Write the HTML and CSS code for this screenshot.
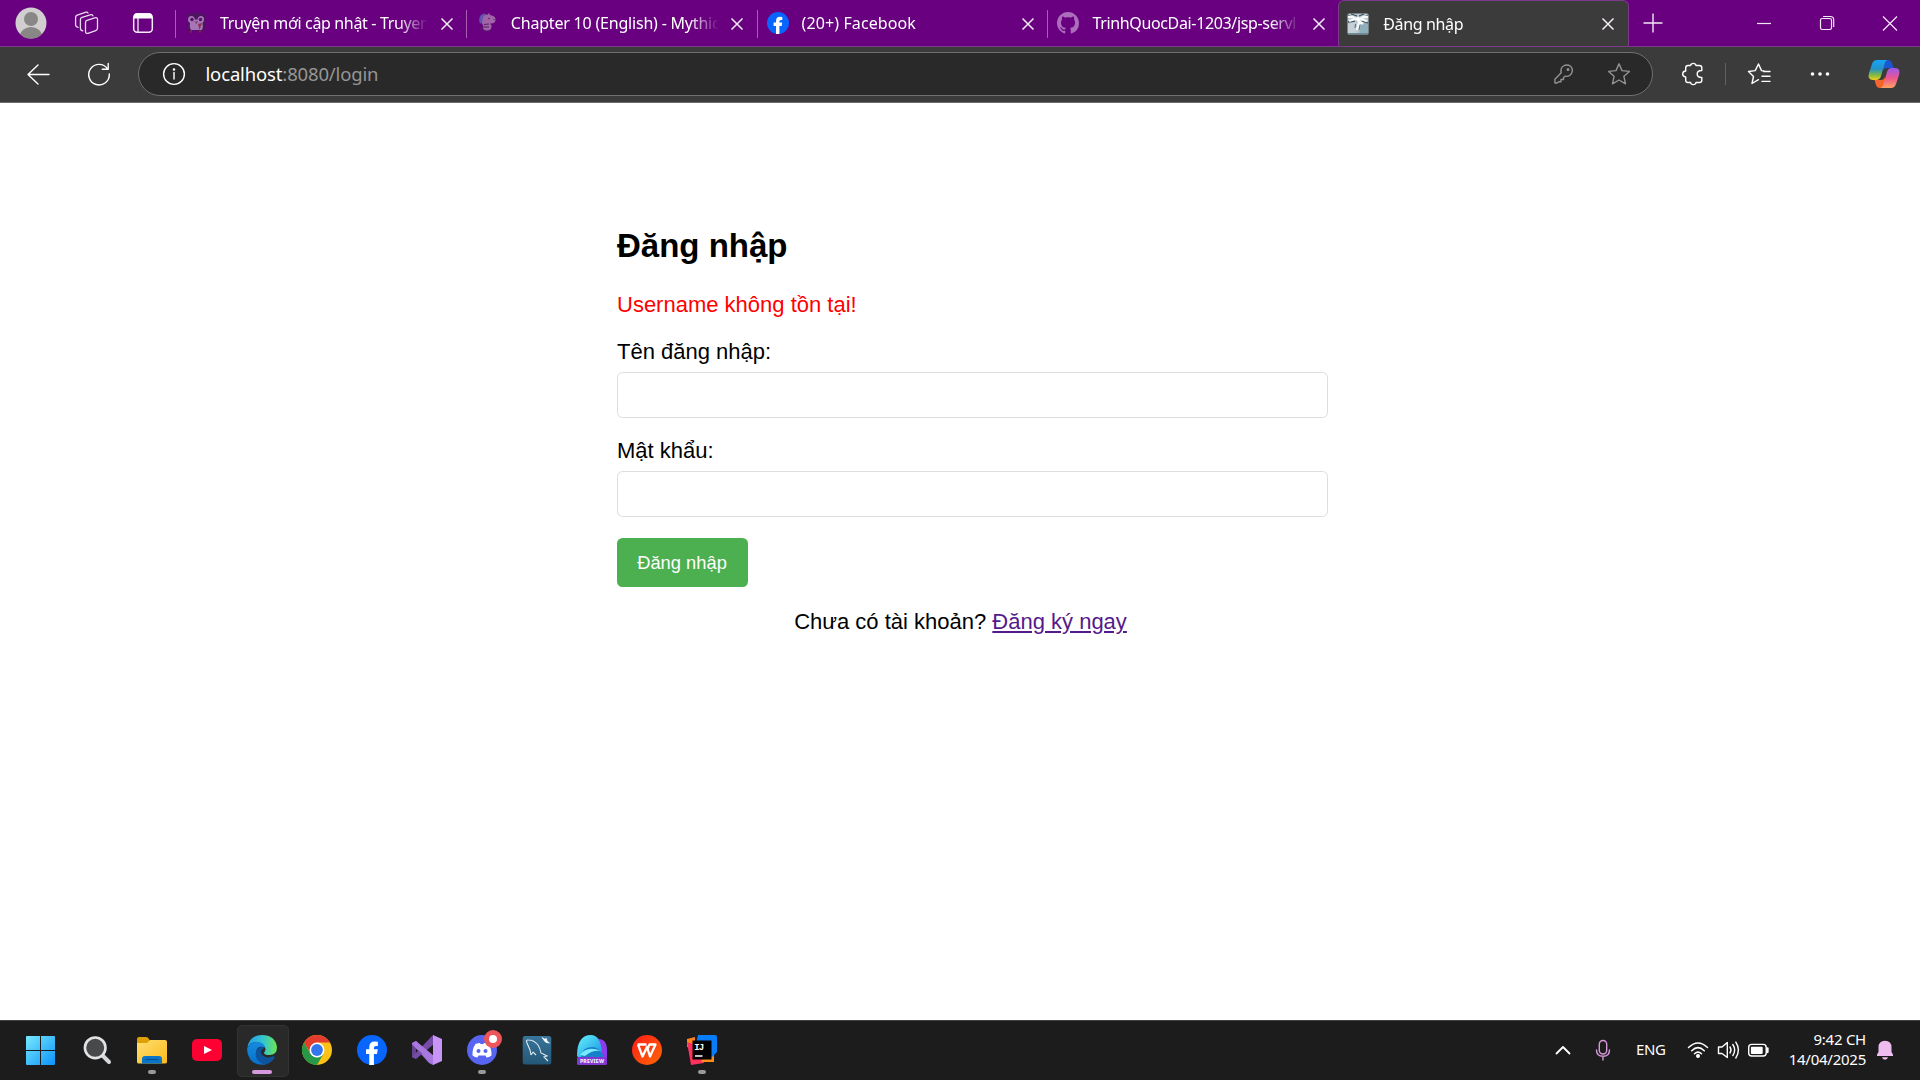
FILE: index.html
```
<!DOCTYPE html>
<html lang="vi">
<head>
<meta charset="utf-8">
<title>Đăng nhập</title>
<link rel="stylesheet" href="styles.css">
</head>
<body>
<div class="screen">
  <header class="tabbar">
    <div class="tools">
      <svg class="avatar" viewBox="0 0 32 32"><defs><clipPath id="av"><circle cx="16" cy="16" r="15.5"/></clipPath></defs><circle cx="16" cy="16" r="15.5" fill="#d0cece"/><g fill="#898785" clip-path="url(#av)"><circle cx="16" cy="12" r="7"/><ellipse cx="16" cy="29" rx="11" ry="9"/></g></svg>
      <svg class="workspaces" viewBox="0 0 26 26" fill="none" stroke="#eadcf0" stroke-width="1.3" stroke-linejoin="round" stroke-linecap="round"><path d="M11.500 12.500Q11.500 10.800 13 10.300L21.500 7.700Q23.500 7.300 23.500 9.300V18Q23.500 20 21.700 20.600L14 23.300Q11.600 24 11.500 21.500Z"/><path d="M8.800 20.800Q6.400 20.600 6.400 18V9.500Q6.400 7.800 8 7.300L17 4.600Q18.600 4.300 18.900 5.800"/><path d="M4 17.300Q1.600 16.800 1.600 14.500V7.500Q1.600 5.800 3.200 5.200L12 2.200Q13.500 1.800 14 3"/></svg>
      <svg class="tabactions" viewBox="0 0 22 22"><rect x="1.700" y="1.700" width="18.600" height="18.600" rx="3.500" fill="none" stroke="#f4edf7" stroke-width="1.500"/><path d="M2 6.500V4Q2 1.500 4.500 1.500H17.500Q20 1.500 20 4V6.500Z" fill="#fff"/><path d="M6 6V20" stroke="#f4edf7" stroke-width="1.300"/></svg>
    </div>
    <div class="tab">
      <svg class="fav" viewBox="0 0 22 22"><rect x="2" y="1" width="18" height="18" rx="4" fill="#4d1461"/><path d="M3 8Q3 4 6.500 4Q9.500 4 10 7.500H12.500Q13 4 16 4Q19 4 19 7.500Q19 9.500 17.500 11Q18.500 15 17 18H6Q4 15 5 11Q3 10 3 8Z" fill="#a874b8"/><circle cx="7" cy="7.500" r="1.700" fill="#4d1461"/><circle cx="15.500" cy="7.500" r="1.700" fill="#4d1461"/><path d="M9.500 9.500H13L11.500 12Z" fill="#7d3f62"/><path d="M13 12L17 11L14.500 18" fill="#8c3552"/><path d="M6 18.500v2M15 18.500v2" stroke="#7d2a3e" stroke-width="2"/></svg>
      <span class="title t1">Truyện mới cập nhật - Truyen</span><svg class="close" viewBox="0 0 14 14"><path d="M1.500 1.500l11 11M12.500 1.500l-11 11"/></svg>
    </div>
    <div class="tab">
      <svg class="fav" viewBox="0 0 22 22"><path d="M6 5Q8 2 12 2.500L13 .5L14 3Q20 4 19.500 8Q19 12 14 11.500Q16 13 15.500 15Q15 19 10 18.500Q6 18 7 13Q4 10 6 5Z" fill="#a263a9"/><path d="M4 12Q2 6 5 3Q8 .5 10 2Q6 5 6.500 9Z" fill="#6253b0"/><path d="M8 12.500L13 12M6 18L4 15M9 18V20.500M13 18V20.500M7 15H13" stroke="#512461" stroke-width="1.200" fill="none"/><circle cx="13" cy="6.500" r=".8" fill="#512461"/><circle cx="18" cy="7.500" r=".6" fill="#512461"/></svg>
      <span class="title t2">Chapter 10 (English) - Mythic</span><svg class="close" viewBox="0 0 14 14"><path d="M1.500 1.500l11 11M12.500 1.500l-11 11"/></svg>
    </div>
    <div class="tab">
      <svg class="fav" viewBox="0 0 22 22"><circle cx="11" cy="11" r="11" fill="#0866ff"/><path d="M9 22V13.900H6.600V10.500H9V9Q9 4.700 13 4.700Q14.300 4.700 15.300 5V8H13.900Q12.400 8 12.400 9.500V10.500H15.200L14.700 13.900H12.400V22Z" fill="#fff"/></svg>
      <span class="title t3">(20+) Facebook</span><svg class="close" viewBox="0 0 14 14"><path d="M1.500 1.500l11 11M12.500 1.500l-11 11"/></svg>
    </div>
    <div class="tab">
      <svg class="fav" viewBox="0 0 16 16"><path fill="#ad6dbd" d="M8 0C3.58 0 0 3.58 0 8c0 3.54 2.29 6.53 5.47 7.59.4.07.55-.17.55-.38 0-.19-.01-.82-.01-1.49-2.01.37-2.53-.49-2.69-.94-.09-.23-.48-.94-.82-1.13-.28-.15-.68-.52-.01-.53.63-.01 1.08.58 1.23.82.72 1.21 1.87.87 2.33.66.07-.52.28-.87.51-1.07-1.78-.2-3.64-.89-3.64-3.95 0-.87.31-1.59.82-2.15-.08-.2-.36-1.02.08-2.12 0 0 .67-.21 2.2.82.64-.18 1.32-.27 2-.27s1.36.09 2 .27c1.53-1.04 2.2-.82 2.2-.82.44 1.1.16 1.92.08 2.12.51.56.82 1.27.82 2.15 0 3.07-1.87 3.75-3.65 3.95.29.25.54.73.54 1.48 0 1.07-.01 1.93-.01 2.2 0 .21.15.46.55.38A8.01 8.01 0 0 0 16 8c0-4.42-3.58-8-8-8z"/></svg>
      <span class="title t4">TrinhQuocDai-1203/jsp-servl</span><svg class="close" viewBox="0 0 14 14"><path d="M1.500 1.500l11 11M12.500 1.500l-11 11"/></svg>
    </div>
    <div class="tab active">
      <svg class="fav" viewBox="0 0 22 22"><rect x=".5" y=".5" width="21" height="21" rx="1.500" fill="#b9c8d0"/><path d="M1 11L8 9L9 20H1Z" fill="#c5d0d5"/><path d="M14 11L21 9V20H12Z" fill="#8fafbd"/><path d="M1 2L8 5M21 2L14 5M1 9L8 8M14 8L21 10M4 1L10 3M17 1L12 3" stroke="#3d5059" stroke-width="1.300" fill="none"/><path d="M1 4Q5 3 9 6Q5 7 2 8M21 4Q17 3 13 6Q17 7 20 8M11 5L12 9L10 17M12 8L16 11" stroke="#f5f9fa" stroke-width="2.300" fill="none"/><circle cx="11" cy="6" r="2" fill="#fff"/><path d="M8.500 11L8 15M13 12L12 17" stroke="#52707d" fill="none"/><path d="M1 20.700H21" stroke="#5b7d8c"/></svg>
      <span class="title t5">Đăng nhập</span><svg class="close" viewBox="0 0 14 14"><path d="M1.500 1.500l11 11M12.500 1.500l-11 11"/></svg>
    </div>
    <svg class="newtab" viewBox="0 0 20 20" stroke="#f2e8f5" stroke-width="1.400"><path d="M10 .5V19.500M.5 10H19.500"/></svg>
    <div class="winbtns">
      <svg viewBox="0 0 18 18"><path d="M2 9.500H16"/></svg>
      <svg viewBox="0 0 18 18"><rect x="2.500" y="4.500" width="11" height="11" rx="1.700"/><path d="M5 2.500H12.500Q15.700 2.500 15.700 5.700V13"/></svg>
      <svg viewBox="0 0 18 18"><path d="M2 2.500l14 14M16 2.500l-14 14"/></svg>
    </div>
  </header>
  <div class="toolbar">
    <svg class="ic back" viewBox="0 0 24 24"><path d="M23 12.500H2M12 3L2 12.500L12 22"/></svg>
    <svg class="ic reload" viewBox="0 0 24 24"><path d="M22.300 12A10.300 10.300 0 1 1 20.500 6.800M21.200 1.500V7.300H15.300"/></svg>
    <div class="address">
      <svg class="ic" viewBox="0 0 24 24"><circle cx="12" cy="12" r="10.400"/><path d="M12 10.500V17"/><circle cx="12" cy="7.500" r=".6" fill="#fff"/></svg>
      <span class="url">localhost<span class="path">:8080/login</span></span>
      <svg class="ic key" viewBox="0 0 24 24"><path d="M9.200 10.800Q8.200 5.800 11.500 4Q15 1.800 18.500 4.300Q21.500 7.300 19.700 11Q17.700 15 13 14.200L11.500 15.500V17.500H9V19.700H7L5 21H2.900V17.300Z"/><circle cx="16" cy="7.500" r=".8"/></svg>
      <svg class="ic star" viewBox="0 0 24 24"><path d="M12 1.800L15 8.600L22.400 9.400L16.900 14.300L18.500 21.800L12 18L5.500 21.800L7.100 14.300L1.600 9.400L9 8.600Z"/></svg>
    </div>
    <svg class="ic ext" viewBox="0 0 24 24"><path d="M7 3.500H9.600Q9.900 1.400 12.300 1.400Q14.700 1.400 15 3.500H18.500Q20.800 3.500 20.800 5.800V8.500Q16.200 8.400 16.200 12Q16.200 15.600 20.800 15.500V18.200Q20.800 20.500 18.500 20.500H15Q14.700 22.600 12.300 22.600Q9.900 22.600 9.600 20.500H7Q4.700 20.500 4.700 18.200V15Q1.700 14.700 1.700 12Q1.700 9.300 4.700 9V5.800Q4.700 3.500 7 3.500Z"/></svg>
    <i class="rule"></i>
    <svg class="ic favs" viewBox="0 0 24 24"><path d="M11.500 17.700L5 21.500L6.500 14.500L1.500 9.500L8.200 8.600L11.500 2L14.500 8.600L17 9M16.500 9.500H23M15 14.200H23M15 19.400H23"/></svg>
    <svg class="ic more" viewBox="0 0 24 24"><g fill="#fff" stroke="none"><circle cx="4.500" cy="12" r="1.800"/><circle cx="12" cy="12" r="1.800"/><circle cx="19.500" cy="12" r="1.800"/></g></svg>
    <svg class="copilot" viewBox="0 0 32 30"><defs><linearGradient id="c1" x1="0" y1="0" x2="0" y2="1"><stop stop-color="#18a5f5"/><stop offset=".45" stop-color="#2591c9"/><stop offset=".75" stop-color="#7eb944"/><stop offset="1" stop-color="#f5cf17"/></linearGradient><linearGradient id="c2" x1="0" y1="0" x2="0" y2="1"><stop stop-color="#9a59ed"/><stop offset=".5" stop-color="#ed568e"/><stop offset="1" stop-color="#ffa162"/></linearGradient></defs><path d="M15 1H20Q23 1 24 4L25.500 9H19Q16 9 15 12Z" fill="#1958cf"/><path d="M17 29H12Q9 29 8 26L6.500 21H13Q16 21 17 18Z" fill="#f4652e"/><path d="M9 1H20Q17.500 1 16.500 5L13 17Q12 21 8 21H5Q-1 21 1 14L4 5Q5.300 1 9 1Z" fill="url(#c1)"/><path d="M23 29H12Q14.500 29 15.500 25L19 13Q20 9 24 9H27Q33 9 31 16L28 25Q26.700 29 23 29Z" fill="url(#c2)"/></svg>
  </div>
  <main class="page">
    <form class="login">
      <h2>Đăng nhập</h2>
      <p class="error">Username không tồn tại!</p>
      <label for="user">Tên đăng nhập:</label>
      <input id="user" type="text">
      <label for="pass">Mật khẩu:</label>
      <input id="pass" type="password">
      <button type="button">Đăng nhập</button>
      <p class="signup">Chưa có tài khoản? <a href="#">Đăng ký ngay</a></p>
    </form>
  </main>
  <footer class="taskbar">
    <div class="apps">
      <div class="app"><svg viewBox="0 0 30 30"><defs><linearGradient id="w" x1="0" y1="0" x2="1" y2="1"><stop stop-color="#78eaff"/><stop offset="1" stop-color="#0b93f9"/></linearGradient></defs><path d="M-1 2Q-1 1 0 1H13V15H-1ZM14 1H27Q28 1 28 2V15H14ZM-1 16H13V30H0Q-1 30-1 29ZM14 16H28V29Q28 30 27 30H14Z" fill="url(#w)"/></svg></div>
      <div class="app"><svg viewBox="0 0 30 30"><path d="M20 20L27 27" stroke="#d5d7da" stroke-width="4" stroke-linecap="round"/><circle cx="13.200" cy="12.800" r="10.300" fill="#47494b" stroke="#e1e3e5" stroke-width="2.600"/></svg></div>
      <div class="app run"><svg viewBox="0 0 30 30"><defs><linearGradient id="f" x1="0" y1="0" x2="1" y2="1"><stop stop-color="#ffdf73"/><stop offset="1" stop-color="#fbba18"/></linearGradient></defs><path d="M0 4Q0 2 2 2H9Q11 2 12 4L13 6H20V12H0Z" fill="#dda006"/><path d="M0 8H10L13 5H28Q30 5 30 7V27Q30 28.500 28 28.500H2Q0 28.500 0 27Z" fill="url(#f)"/><path d="M5 28.500V24Q5 21 8 21H22Q25 21 25 24V28.500Z" fill="#0875c9"/><path d="M8.500 24.500H21.500" stroke="#07518c" stroke-width="1.200"/></svg></div>
      <div class="app"><svg viewBox="0 0 30 30"><rect y="4" width="30" height="22" rx="5" fill="#ff0033"/><path d="M12 11L20 15L12 19Z" fill="#fff"/></svg></div>
      <div class="app current"><svg viewBox="0 0 30 30"><defs><linearGradient id="e1"><stop stop-color="#249ee8"/><stop offset=".55" stop-color="#35c5cd"/><stop offset="1" stop-color="#6be650"/></linearGradient><linearGradient id="e2" x1="0" y1="0" x2="0" y2="1"><stop stop-color="#158be0"/><stop offset="1" stop-color="#0870cc"/></linearGradient></defs><path d="M.3 13Q2 0 15 0Q28 0 30 12Q30 20 22.500 20Q17 20 17 17.700Q19 15.500 18.300 13Q16 7 9 7Q3 7 .3 13Z" fill="url(#e1)"/><path d="M0 14Q3 7 10 7Q17 7 18.300 13Q10 9 9 18Q9 27 19 29.500Q8 31 3 24Q0 19 0 14Z" fill="url(#e2)"/><path d="M18 12.500Q12 10.500 9 16.500Q7 26 18 29.700Q25 28 28 22Q26 20.500 24 22Q18 23.500 14.500 19Q12 15.500 18 12.500Z" fill="#0d549d"/></svg></div>
      <div class="app"><svg viewBox="0 0 30 30"><circle cx="15" cy="15" r="15" fill="#fbc116"/><path d="M2 7.500A15 15 0 0 1 28 7.500H15L9 19Z" fill="#e33b2e"/><path d="M2 7.500A15 15 0 0 0 15 30L21.500 18.700L15 22.500L8.500 18.700Z" fill="#279847"/><circle cx="15" cy="15" r="7.500" fill="#fff"/><circle cx="15" cy="15" r="5.900" fill="#3275ec"/></svg></div>
      <div class="app"><svg viewBox="0 0 22 22"><circle cx="11" cy="11" r="11" fill="#0866ff"/><path d="M9 22V13.900H6.600V10.500H9V9Q9 4.700 13 4.700Q14.300 4.700 15.300 5V8H13.900Q12.400 8 12.400 9.500V10.500H15.200L14.700 13.900H12.400V22Z" fill="#fff"/></svg></div>
      <div class="app"><svg viewBox="0 0 30 30"><path d="M0 8L4 6V24L0 22Z" fill="#674291"/><path d="M4 6L21 26V30L17 28L0 9Z" fill="#a375d8"/><path d="M0 22L20 1L22 0V9L4 24Z" fill="#744ca7"/><path d="M0 8L4 6L22 21V30L0 9Z" fill="#a878df"/><path d="M21 0L30 4V26L21 30Z" fill="#c894f6"/></svg></div>
      <div class="app run"><svg viewBox="0 0 30 30"><circle cx="15" cy="15" r="15" fill="#5865f2"/><path d="M10 8.500Q12 7.800 13 8L13.500 9H16.500L17 8Q19 8 21 8.500Q25 14 24.500 20.500Q22 22.500 19.500 22.500L18.500 20.500H11.500L10.500 22.500Q8 22.500 5.500 20.500Q5 14 8.500 9Z" fill="#fff"/><circle cx="11.500" cy="16" r="2" fill="#5865f2"/><circle cx="18.500" cy="16" r="2" fill="#5865f2"/><circle cx="26" cy="4" r="9" fill="#ed555b"/><circle cx="26" cy="4" r="4" fill="#fff"/></svg></div>
      <div class="app"><svg viewBox="0 0 30 30"><defs><linearGradient id="m" x1="0" y1="0" x2="0" y2="1"><stop stop-color="#38759b"/><stop offset="1" stop-color="#245777"/></linearGradient></defs><rect x=".7" y="1" width="28.600" height="28.500" rx="2.500" fill="url(#m)"/><path d="M9 20L8 15L5 8Q3.500 4.500 6.500 5Q12 5 16 10Q18 13 19 18L25 21L22 22L26 26M9 20L11 17L14 20" stroke="#e0eaf0" stroke-width="1.100" fill="none"/><path d="M20 2.500L22.500 4L24.500 3.500L25 6L27.500 8L24 7.500L22.500 6Z" fill="#fff" stroke="#fff" stroke-width=".6"/></svg></div>
      <div class="app"><svg viewBox="0 0 30 30"><defs><linearGradient id="p" x1="0" y1="0" x2="1" y2="1"><stop stop-color="#65f4fd"/><stop offset="1" stop-color="#168ee0"/></linearGradient></defs><path d="M17 4Q30 2 30 15V23H18Z" fill="#8d3bef"/><path d="M0 21Q0 0 14 0Q23 0 25 16Q25 22 19 23H2Z" fill="url(#p)"/><path d="M4 22Q5 12 15 12Q22 12 26 20V23H4Z" fill="#1780ca"/><path d="M3 20Q10 10 24 16Q15 15 8 21Z" fill="#77eafb"/><rect y="22" width="30" height="8" rx="1.500" fill="#8339d1"/><text x="15" y="28" text-anchor="middle" class="preview">PREVIEW</text></svg></div>
      <div class="app"><svg viewBox="0 0 30 30"><defs><linearGradient id="o" x1="0" y1="0" x2="1" y2="1"><stop stop-color="#ff1a16"/><stop offset="1" stop-color="#ff6805"/></linearGradient></defs><circle cx="15" cy="15" r="15" fill="url(#o)"/><path d="M5.500 9.500H14.500M6 9.500L10.500 21.500L15 12L18 21.500L23.500 9.500H17.500L15 15" stroke="#fff" stroke-width="2.300" fill="none" stroke-linejoin="round"/></svg></div>
      <div class="app run"><svg viewBox="0 0 30 30"><path d="M0 4L8 2V10L5 14L0 12Z" fill="#fc801d"/><path d="M0 7L11 11L17 28L4 30Z" fill="#fe315d"/><path d="M19 16H27V27H14Z" fill="#ff8b19"/><path d="M11 0H28Q30 0 30 2V17L25 22L9 9Z" fill="#087cfa"/><rect x="5.500" y="5.500" width="19" height="19" fill="#000"/><text x="7.300" y="14.500" class="ij">IJ</text><path d="M8 21H15.500" stroke="#fff" stroke-width="1.500"/></svg></div>
    </div>
    <div class="tray">
      <svg class="chev" viewBox="0 0 24 24"><path d="M5.500 15.500L12 9L18.500 15.500" stroke-width="1.800"/></svg>
      <svg class="mic" viewBox="0 0 24 24"><rect x="8.300" y="2.500" width="7.400" height="13.500" rx="3.700"/><path d="M5.500 12Q5.500 18.300 12 18.300Q18.500 18.300 18.500 12M12 18.500V22"/></svg>
      <span class="lang">ENG</span>
      <svg class="wifi" viewBox="0 0 24 24"><path d="M2.500 9.500Q12 .5 21.500 9.500M5.700 12.700Q12 6.500 18.300 12.700M8.500 15.800Q12 12.500 15.500 15.800" stroke-width="1.500"/><circle cx="12" cy="18" r="1.300" fill="#fff"/></svg>
      <svg class="sound" viewBox="0 0 24 24"><path d="M2.500 9H6L11.300 4.500V19.500L6 15.500H2.500ZM14 9Q16 12 14 15M16.800 6.500Q20.500 12 16.800 17.500M19.800 4.200Q25 12 19.800 20"/></svg>
      <svg class="battery" viewBox="0 0 24 24"><rect x="2.700" y="6.400" width="17.500" height="11.600" rx="3"/><rect x="4.900" y="8.700" width="11.800" height="7.200" rx="1" fill="#fff" stroke="none"/><path d="M21.500 10.500V14" stroke-width="2.300"/></svg>
      <div class="clock"><span class="time">9:42 CH</span><span class="date">14/04/2025</span></div>
      <svg class="bell" viewBox="0 0 24 24"><path d="M4 18V16.500L5.500 14V9.500Q5.500 2.800 12 2.800Q18.500 2.800 18.500 9.500V14L20 16.500V18ZM9 19.300H15Q14.500 21.700 12 21.700Q9.500 21.700 9 19.300Z" fill="#efbcf0" stroke="none"/></svg>
    </div>
  </footer>
</div>
</body>
</html>
```
FILE: styles.css
```
* { box-sizing: border-box; }
body { margin: 0; background: #fff; }
svg { display: block; flex: none; overflow: visible; }
.screen {
  width: 1920px;
  height: 1080px;
  display: flex;
  flex-direction: column;
  overflow: hidden;
  font-family: "Noto Sans", sans-serif;
}

/* tab strip */
.tabbar { height: 46px; display: flex; background: #68007f; color: #fff; }
.tools { width: 175px; display: flex; align-items: center; padding-left: 14.5px; }
.avatar { width: 32px; height: 32px; }
.workspaces { width: 26px; height: 26px; margin-left: 27px; }
.tabactions { width: 22px; height: 22px; margin-left: 32.5px; }
.tab {
  width: 290.8px;
  height: 46px;
  display: flex;
  align-items: center;
  padding-left: 10px;
  background: linear-gradient(#a45fb3, #a45fb3) 0 10px / 1px 28px no-repeat;
}
.tab.active {
  height: 47px;
  background: #3b3b3b;
  border: 1px solid #7b3b88;
  border-bottom: 0;
  border-radius: 6px 6px 0 0;
  padding-left: 7.5px;
}
.fav { width: 22px; height: 22px; }
.title {
  width: 208px;
  margin-left: 13px;
  overflow: hidden;
  white-space: nowrap;
  font-size: 16px;
  line-height: 24px;
  -webkit-mask-image: linear-gradient(90deg, #000 178px, transparent 208px);
}
.active .title { margin-left: 14.5px; }
.active .close { margin-left: 9.5px; }
.t1, .t4, .t5 { letter-spacing: -.35px; }
.t2 { letter-spacing: -.2px; }
.t3 { letter-spacing: .1px; }
.close { width: 14px; height: 14px; margin: 2px 0 0 11.5px; stroke: #f4edf7; stroke-width: 1.5; }
.active .close, .active .fav { margin-top: 0; }
.newtab { width: 20px; height: 20px; margin: 13px 0 0 14.5px; }
.winbtns { margin-left: auto; display: flex; align-items: center; gap: 45px; padding-right: 21.5px; }
.winbtns svg { width: 18px; height: 18px; fill: none; stroke: #f2e8f5; stroke-width: 1.2; }

/* navigation row */
.toolbar {
  height: 57px;
  display: flex;
  align-items: center;
  padding-bottom: 2px;
  background: #3b3b3b;
  border-top: 1px solid #7b3b88;
  border-bottom: 1px solid #6b6b6b;
}
.ic { width: 24px; height: 24px; fill: none; stroke: #fff; stroke-width: 1.4; stroke-linejoin: round; stroke-linecap: round; }
.back { margin-left: 26px; }
.reload { margin-left: 37px; }
.address {
  width: 1515px;
  height: 44px;
  margin-left: 27px;
  display: flex;
  align-items: center;
  padding-left: 22.5px;
  background: #292929;
  border: 1px solid #707070;
  border-radius: 22px;
}
.url { margin-left: 20px; font-size: 18.5px; line-height: 26px; letter-spacing: -.15px; color: #fff; }
.path { color: #969696; }
.key, .star { stroke: #939393; }
.key { margin-left: auto; }
.star { margin: 0 21px 0 31px; }
.ext { margin-left: 27.5px; }
.rule { width: 1px; height: 22px; margin-left: 20.5px; background: #616161; }
.favs { margin-left: 21px; }
.more { margin-left: 36.5px; }
.copilot { width: 32px; height: 30px; margin-left: 36px; }

/* page */
.page { height: 917px; padding: 124px 617px 0; font-family: "Liberation Sans", Arial, sans-serif; color: #000; background: #fff; }
.login { width: 687px; font-size: 22px; line-height: 25px; }
.login h2 { margin: 0 0 27px; font-size: 33px; line-height: 38px; }
.error { margin: 0 0 22px; color: #f00; }
.login label { display: block; }
.login input {
  display: block;
  width: 711px;
  height: 46px;
  margin: 8px 0 20px;
  border: 1px solid #ddd;
  border-radius: 5.5px;
  background: #fff;
}
.login button {
  display: block;
  width: 131px;
  height: 49px;
  margin: 21px 0 22px;
  padding: 0 1px 1px 0;
  border: 0;
  border-radius: 5.5px;
  background: #4caf50;
  color: #fff;
  font: 18.33px/21px "Liberation Sans", Arial, sans-serif;
}
.signup { margin: 0; text-align: center; }
.signup a { color: #551a8b; }

/* taskbar */
.taskbar { height: 60px; display: flex; justify-content: space-between; background: #1c1c1c; border-top: 1px solid #404244; color: #fff; }
.apps { display: flex; padding-left: 14.5px; }
.app { position: relative; width: 55px; height: 58px; display: flex; align-items: center; justify-content: center; }
.app > svg { position: relative; width: 30px; height: 30px; }
.run::after, .current::after { content: ""; position: absolute; bottom: 5px; width: 8px; height: 4px; border-radius: 2px; background: #999; }
.current::after { width: 20px; background: #d798e0; }
.current::before { content: ""; position: absolute; left: 2.5px; top: 4px; width: 50px; height: 50px; border: 1px solid #333; border-radius: 5px; background: #292929; }
.preview { font: bold 5.2px "Noto Sans", sans-serif; letter-spacing: .2px; fill: #fff; }
.ij { font: bold 9px "Liberation Mono", monospace; letter-spacing: -1px; fill: #fff; }
.tray { height: 58px; display: flex; align-items: center; padding-right: 23px; }
.tray svg { width: 24px; height: 24px; fill: none; stroke: #fff; stroke-width: 1.4; stroke-linejoin: round; stroke-linecap: round; }
.tray .mic { margin-left: 16px; stroke: #d797d8; }
.lang { width: 31px; margin-left: 21px; padding-bottom: 2px; font-size: 15px; letter-spacing: -.4px; }
.tray .wifi { margin-left: 19px; }
.tray .sound { margin-left: 6px; }
.tray .battery { margin-left: 6px; }
.clock { width: 96px; display: flex; flex-direction: column; align-items: flex-end; padding-bottom: 3px; font-size: 15px; line-height: 20px; letter-spacing: -.25px; }
.tray .bell { margin-left: 7px; }
```
